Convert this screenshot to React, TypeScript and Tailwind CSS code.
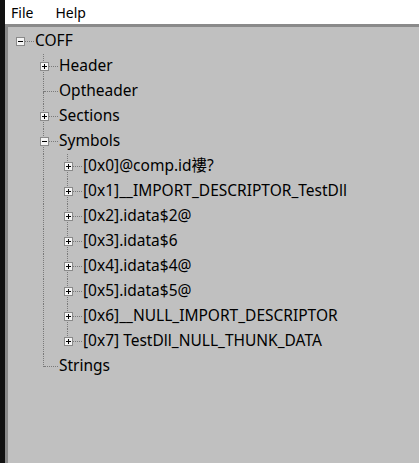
type Node = {
  label: string;
  expanded?: boolean;
  hasChildren?: boolean;
  children?: Node[];
};

const tree: Node = {
  label: "COFF",
  expanded: true,
  hasChildren: true,
  children: [
    { label: "Header", hasChildren: true },
    { label: "Optheader" },
    { label: "Sections", hasChildren: true },
    {
      label: "Symbols",
      expanded: true,
      hasChildren: true,
      children: [
        { label: "[0x0]@comp.id褸?", hasChildren: true },
        { label: "[0x1]__IMPORT_DESCRIPTOR_TestDll", hasChildren: true },
        { label: "[0x2].idata$2@", hasChildren: true },
        { label: "[0x3].idata$6", hasChildren: true },
        { label: "[0x4].idata$4@", hasChildren: true },
        { label: "[0x5].idata$5@", hasChildren: true },
        { label: "[0x6]__NULL_IMPORT_DESCRIPTOR", hasChildren: true },
        { label: "[0x7] TestDll_NULL_THUNK_DATA", hasChildren: true },
      ],
    },
    { label: "Strings" },
  ],
};

type Row = { node: Node; guides: boolean[]; isRoot: boolean; isLast: boolean };

// walk the tree into flat rows, keeping which ancestor lines keep going
function flatten(node: Node, guides: boolean[], isRoot: boolean, isLast: boolean, out: Row[]) {
  out.push({ node, guides, isRoot, isLast });
  if (node.expanded && node.children) {
    node.children.forEach((c, i) => {
      const last = i === node.children!.length - 1;
      flatten(c, [...guides, !isLast], false, last, out);
    });
  }
}

function ExpandBox({ open }: { open: boolean }) {
  return (
    <div className="relative z-10 flex h-[9px] w-[9px] items-center justify-center border border-[#8a8a8a] bg-[#f4f4f4]">
      <div className="absolute h-px w-[5px] bg-black" />
      {!open && <div className="absolute h-[5px] w-px bg-black" />}
    </div>
  );
}

function TreeRow({ row }: { row: Row }) {
  const { node, guides, isRoot, isLast } = row;
  return (
    <div className="flex h-[25px] items-stretch">
      {guides.map((g, i) => (
        <div key={i} className="relative w-6 shrink-0">
          {g && <div className="absolute left-[11px] top-0 h-full border-l border-dotted border-[#7a7a7a]" />}
        </div>
      ))}
      <div className="relative flex w-6 shrink-0 items-center justify-center">
        {!isRoot && (
          <div className="absolute left-[11px] top-0 h-1/2 border-l border-dotted border-[#7a7a7a]" />
        )}
        {!isRoot && !isLast && (
          <div className="absolute left-[11px] top-1/2 h-1/2 border-l border-dotted border-[#7a7a7a]" />
        )}
        <div className="absolute left-[12px] right-[-2px] top-[12px] border-t border-dotted border-[#7a7a7a]" />
        {node.hasChildren && <ExpandBox open={!!node.expanded} />}
      </div>
      <div className="flex items-center pl-[3px] pb-px text-[15.5px] leading-none text-black">
        <span className="relative z-10 bg-[#c0c0c0]">{node.label}</span>
      </div>
    </div>
  );
}

export default function App() {
  const rows: Row[] = [];
  flatten(tree, [], true, true, rows);

  return (
    <div
      className="flex h-[463px] w-[419px] bg-[#111111]"
      style={{ fontFamily: '"Noto Sans", "Noto Sans CJK SC", sans-serif' }}
    >
      <div className="ml-[5px] flex flex-1 flex-col">
        <div className="flex h-[24px] items-center gap-[22px] bg-white pl-[6px] text-[14px] text-black">
          <span>File</span>
          <span>Help</span>
        </div>
        <div className="flex flex-1 flex-col border-l-[3px] border-t-[3px] border-l-[#8a8a8a] border-t-[#8a8a8a] bg-[#c0c0c0] pt-[2px]">
          {rows.map((r, i) => (
            <TreeRow key={i} row={r} />
          ))}
        </div>
      </div>
    </div>
  );
}
